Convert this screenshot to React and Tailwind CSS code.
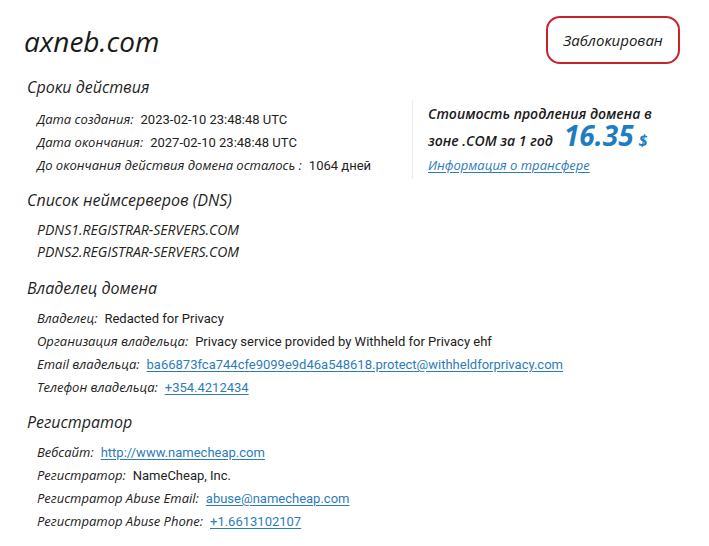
import React from "react";

const font = { fontFamily: '"Open Sans", "Noto Sans", sans-serif' };
const valueFont = { fontFamily: 'Roboto, "Open Sans", sans-serif' };

function Row({ label, children }) {
  return (
    <div className="flex items-baseline h-[23px] text-[13px] text-[#222]">
      <span className="italic">{label}:</span>
      <span className="ml-[7px] text-[13px]" style={valueFont}>{children}</span>
    </div>
  );
}

function Link({ children }) {
  return <a className="text-[#2d7cb8] underline underline-offset-2" href="#">{children}</a>;
}

function Heading({ children }) {
  return <h2 className="italic font-medium text-[16px] text-[#1f1f1f] leading-none">{children}</h2>;
}

export default function App() {
  return (
    <div className="w-[709px] h-[546px] bg-white overflow-hidden" style={font}>
      <div className="flex items-start justify-between pl-[24px] pr-[29px] pt-[16px]">
        <h1 className="italic font-medium text-[28px] text-[#1a1a1a] leading-none mt-[11px]">axneb.com</h1>
        <div className="w-[134px] h-[48px] rounded-[14px] border-2 border-[#c8232c] flex items-center justify-center italic font-medium text-[15px] text-[#1a1a1a]">
          Заблокирован
        </div>
      </div>

      <div className="flex mt-[15px]">
        <div className="w-[412px] pl-[27px]">
          <Heading>Сроки действия</Heading>
          <div className="pl-[10px] mt-[15px]">
            <Row label="Дата создания">2023-02-10 23:48:48 UTC</Row>
            <Row label="Дата окончания">2027-02-10 23:48:48 UTC</Row>
            <Row label="До окончания действия домена осталось ">1064 дней</Row>
          </div>
        </div>
        {/* renewal price panel */}
        <div className="mt-[21px] pt-[4px] border-l border-[#ececec] pl-[15px]">
          <div className="italic font-semibold text-[14px] text-[#1a1a1a] leading-[20px]">Стоимость продления домена в</div>
          <div className="mt-[4px] italic font-semibold text-[14px] text-[#1a1a1a] leading-[26px] whitespace-nowrap">
            <span>зоне .COM за 1 год</span>
            <span className="ml-[11px] text-[28px] font-bold text-[#1e7dc2] leading-[0]">16.35</span>
            <span className="ml-[5px] text-[16px] font-bold text-[#1e7dc2] leading-[0]">$</span>
          </div>
          <div className="leading-[20px]">
            <a href="#" className="italic text-[13px] text-[#2d7cb8] underline underline-offset-2">Информация о трансфере</a>
          </div>
        </div>
      </div>

      <div className="pl-[27px] mt-[13px]">
        <Heading>Список неймсерверов (DNS)</Heading>
        <div className="pl-[10px] mt-[11px] italic text-[14px] text-[#222]">
          <div className="h-[22px]">PDNS1.REGISTRAR-SERVERS.COM</div>
          <div className="h-[22px]">PDNS2.REGISTRAR-SERVERS.COM</div>
        </div>

        <div className="mt-[17px]">
          <Heading>Владелец домена</Heading>
        </div>
        <div className="pl-[10px] mt-[13px]">
          <Row label="Владелец">Redacted for Privacy</Row>
          <Row label="Организация владельца">Privacy service provided by Withheld for Privacy ehf</Row>
          <Row label="Email владельца"><Link>ba66873fca744cfe9099e9d46a548618.protect@withheldforprivacy.com</Link></Row>
          <Row label="Телефон владельца"><Link>+354.4212434</Link></Row>
        </div>

        <div className="mt-[13px]">
          <Heading>Регистратор</Heading>
        </div>
        <div className="pl-[10px] mt-[13px]">
          <Row label="Вебсайт"><Link>http://www.namecheap.com</Link></Row>
          <Row label="Регистратор">NameCheap, Inc.</Row>
          <Row label="Регистратор Abuse Email"><Link>abuse@namecheap.com</Link></Row>
          <Row label="Регистратор Abuse Phone"><Link>+1.6613102107</Link></Row>
        </div>
      </div>
    </div>
  );
}
